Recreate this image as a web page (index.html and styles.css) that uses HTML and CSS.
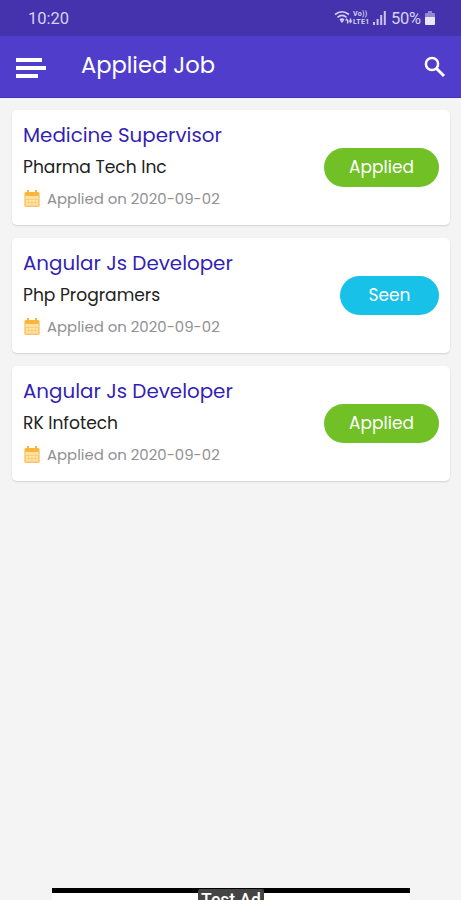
FILE: index.html
```
<!DOCTYPE html>
<html lang="en">
<head>
    <meta charset="UTF-8">
    <meta name="viewport" content="width=device-width, initial-scale=1.0">
    <title>Applied Job</title>
    <link rel="stylesheet" href="styles.css">
</head>
<body>
    <svg width="0" height="0" class="sprite">
        <symbol id="calendar" viewBox="0 0 16 17">
            <path fill="#fdb43a" d="M2 2h12a1.5 1.5 0 0 1 1.5 1.5V6H.5V3.500A1.500 1.500 0 0 1 2 2zM3 0h2v3H3zM11 0h2v3h-2z"/>
            <path fill="#ffe6b0" d="M1 6h14v10H1z"/>
            <path fill="none" stroke="#fdb43a" d="M1 6v9.500a.8.8 0 0 0 .8.8h12.400a.8.8 0 0 0 .8-.8V6" stroke-width="1.100"/>
            <path fill="none" stroke="#fdc562" d="M1 9.500h14M1 12.800h14M4.500 7v9M8 7v9M11.500 7v9" stroke-width=".7"/>
        </symbol>
    </svg>

    <div class="status-bar">
        <span class="clock">10:20</span>
        <div class="status-icons">
            <svg width="19" height="16" viewBox="0 0 19 16">
                <path d="M1 4.500Q8 -1 15 4.500M3.500 7.300Q8 3.500 12.500 7.300M6 10Q8 8.200 10 10" fill="none" stroke="#d6d1f2" stroke-width="1.600"/>
                <path d="M8 13l-2.200-2.800h4.400zM11 10.500l1.700-2.500 1.700 2.500v3h-1.500v-3zM14.500 10.500h1.300v-2h1.400v2h1.300l-2 3z" fill="#d6d1f2"/>
            </svg>
            <div class="volte"><span>Vo))</span><span>LTE1</span></div>
            <svg width="13" height="14" viewBox="0 0 13 14" fill="#c9c3ee">
                <path d="M0 11h2v3H0zM3.600 8h2v6h-2zM7.200 4h2v10h-2zM10.800 0h2v14h-2z"/>
            </svg>
            <span class="percent">50%</span>
            <svg width="10" height="14" viewBox="0 0 10 14">
                <path d="M3 0h4v2h2a1 1 0 0 1 1 1v4H0V3a1 1 0 0 1 1-1h2z" fill="#9187d2"/>
                <path d="M0 6h10v7a1 1 0 0 1-1 1H1a1 1 0 0 1-1-1z" fill="#e9e7f8"/>
            </svg>
        </div>
    </div>

    <div class="app-bar">
        <div class="menu">
            <i class="line line-mid"></i>
            <i class="line line-long"></i>
            <i class="line line-short"></i>
        </div>
        <h1>Applied Job</h1>
        <svg class="search" width="22" height="22" viewBox="0 0 22 22" fill="none" stroke="#fff">
            <circle cx="8" cy="8" r="6.100" stroke-width="2.500"/>
            <path d="M12.500 12.500L20 20" stroke-width="3"/>
        </svg>
    </div>

    <div class="jobs">
        <div class="card">
            <div class="info">
                <h2>Medicine Supervisor</h2>
                <p class="company">Pharma Tech Inc</p>
                <p class="date"><svg width="16" height="17"><use href="#calendar"/></svg><span>Applied on 2020-09-02</span></p>
            </div>
            <span class="badge applied">Applied</span>
        </div>
        <div class="card">
            <div class="info">
                <h2>Angular Js Developer</h2>
                <p class="company">Php Programers</p>
                <p class="date"><svg width="16" height="17"><use href="#calendar"/></svg><span>Applied on 2020-09-02</span></p>
            </div>
            <span class="badge seen">Seen</span>
        </div>
        <div class="card">
            <div class="info">
                <h2>Angular Js Developer</h2>
                <p class="company">RK Infotech</p>
                <p class="date"><svg width="16" height="17"><use href="#calendar"/></svg><span>Applied on 2020-09-02</span></p>
            </div>
            <span class="badge applied">Applied</span>
        </div>
    </div>

    <div class="ad"><span>Test Ad</span></div>
</body>
</html>
```
FILE: styles.css
```
* {
    box-sizing: border-box;
}
body {
    display: flex;
    flex-direction: column;
    height: 900px;
    margin: 0;
    overflow: hidden;
    background-color: #f4f4f4;
    font-family: Poppins, Inter, sans-serif;
}
h1, h2, p {
    margin: 0;
    font-weight: 400;
    white-space: nowrap;
}
.sprite {
    position: absolute;
}
.status-bar {
    display: flex;
    align-items: center;
    justify-content: space-between;
    flex: none;
    height: 36px;
    padding: 0 26px 0 28px;
    background-color: #4433ad;
    color: #d6d1f2;
    font-family: Roboto, sans-serif;
    font-size: 16.5px;
}
.status-icons {
    display: flex;
    align-items: center;
}
.volte {
    display: flex;
    flex-direction: column;
    width: 18px;
    margin: 0 2px 0 0;
    font-size: 7px;
    font-weight: 700;
    line-height: 8px;
    letter-spacing: 0.3px;
}
.percent {
    margin: 0 4px 0 5px;
    letter-spacing: -0.2px;
}
.app-bar {
    display: flex;
    align-items: center;
    flex: none;
    height: 62px;
    padding: 0 15px 0 16px;
    background-color: #503dcb;
    border-bottom: 1px solid #4631b9;
    color: #fff;
}
.menu {
    display: flex;
    flex-direction: column;
    gap: 4px;
    width: 65px;
    padding-top: 2px;
}
.line {
    height: 4px;
    background-color: #fff;
}
.line-mid {
    width: 26px;
}
.line-long {
    width: 30px;
}
.line-short {
    width: 22px;
}
h1 {
    flex: 1;
    padding-bottom: 3px;
    font-size: 22.6px;
}
.search {
    margin-top: 1px;
}
.jobs {
    display: flex;
    flex-direction: column;
    gap: 13px;
    padding: 12px 11px 0 12px;
}
.card {
    display: flex;
    align-items: center;
    justify-content: space-between;
    height: 115px;
    padding: 0 11px;
    background-color: #fff;
    border-radius: 5px;
    box-shadow: 0 1px 2px rgba(0, 0, 0, 0.14);
}
.info {
    padding-bottom: 2px;
    line-height: 32px;
}
h2 {
    color: #341fb4;
    font-size: 19.85px;
}
.company {
    color: #222;
    font-size: 17.1px;
}
.date {
    display: flex;
    align-items: center;
    gap: 7px;
    padding-left: 1px;
    color: #909090;
    font-size: 14.9px;
}
.date svg {
    margin-bottom: 1px;
}
.badge {
    height: 39px;
    border-radius: 20px;
    color: #fff;
    font-size: 17px;
    line-height: 38px;
    text-align: center;
}
.applied {
    width: 115px;
    background-color: #70c026;
}
.seen {
    width: 99px;
    background-color: #17c1e8;
}
.ad {
    display: flex;
    justify-content: center;
    width: 358px;
    height: 12px;
    margin: auto 0 0 52px;
    background-color: #fff;
    border-top: 5px solid #000;
}
.ad span {
    width: 66px;
    height: 24px;
    margin-top: -4px;
    border-radius: 2px 2px 0 0;
    background-color: #444;
    color: #fff;
    font-family: Roboto, sans-serif;
    font-size: 17.5px;
    font-weight: 500;
    line-height: 23px;
    text-align: center;
}
```
